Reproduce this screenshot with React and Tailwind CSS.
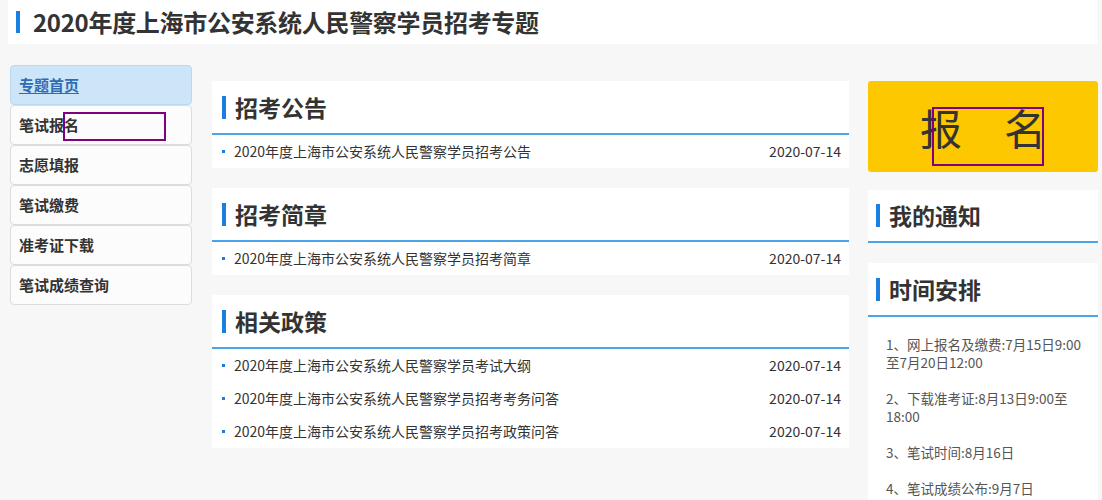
const font = { fontFamily: '"Microsoft YaHei", "Noto Sans CJK SC", sans-serif' };

const navItems = ['专题首页', '笔试报名', '志愿填报', '笔试缴费', '准考证下载', '笔试成绩查询'];

const sections = [
  {
    title: '招考公告',
    items: ['2020年度上海市公安系统人民警察学员招考公告'],
  },
  {
    title: '招考简章',
    items: ['2020年度上海市公安系统人民警察学员招考简章'],
  },
  {
    title: '相关政策',
    items: [
      '2020年度上海市公安系统人民警察学员考试大纲',
      '2020年度上海市公安系统人民警察学员招考考务问答',
      '2020年度上海市公安系统人民警察学员招考政策问答',
    ],
  },
];

const schedule = [
  '1、网上报名及缴费:7月15日9:00至7月20日12:00',
  '2、下载准考证:8月13日9:00至18:00',
  '3、笔试时间:8月16日',
  '4、笔试成绩公布:9月7日',
];

const PanelTitle = ({ children, pl = 'pl-[10px]', h = 'h-[54px]' }) => (
  <div className={`flex items-center ${h} ${pl} border-b-2 border-[#4ba3e8]`}>
    <span className="w-[4px] h-[23px] bg-[#1a7fe0] mr-[9px]"></span>
    <span className="text-[23px] font-bold text-[#333]">{children}</span>
  </div>
);

export default function App() {
  return (
    <div className="min-h-[500px] bg-[#f7f7f7] text-[#333]" style={font}>
      {/* Header */}
      <div className="ml-[8px] w-[1089px] h-[44px] bg-white flex items-center pl-[8px]">
        <span className="w-[4px] h-[22px] bg-[#1a7fe0] mr-[13px]"></span>
        <h1 className="text-[24px] font-bold text-[#333] tracking-[-0.3px]">2020年度上海市公安系统人民警察学员招考专题</h1>
      </div>

      <div className="flex pl-[10px]">
        {/* Left nav */}
        <div className="w-[182px] mt-[21px] flex flex-col">
          {navItems.map((item, i) => (
            <div
              key={item}
              className={`relative h-[40px] flex items-center pl-[8px] rounded-[4px] border text-[15px] font-bold ${
                i === 0
                  ? 'bg-[#cde5f8] border-[#bcd8ef] text-[#2e6db3] underline underline-offset-2'
                  : 'bg-[#fcfcfc] border-[#dcdcdc] text-[#333]'
              }`}
            >
              {item}
              {i === 1 && (
                <div className="absolute left-[52px] top-[6px] w-[103px] h-[29px] border-2 border-[#800080]"></div>
              )}
            </div>
          ))}
        </div>

        {/* Middle */}
        <div className="w-[637px] ml-[20px] mt-[37px] flex flex-col gap-[20px]">
          {sections.map((s) => (
            <div key={s.title} className="bg-white">
              <PanelTitle>{s.title}</PanelTitle>
              <ul>
                {s.items.map((it) => (
                  <li key={it} className="h-[33px] flex items-center pl-[10px] pr-[8px] text-[14px] text-[#333]">
                    <span className="w-[3px] h-[3px] bg-[#1a7fe0] mr-[9px]"></span>
                    <span className="flex-1">{it}</span>
                    <span>2020-07-14</span>
                  </li>
                ))}
              </ul>
            </div>
          ))}
        </div>

        {/* Right */}
        <div className="w-[230px] ml-[19px] mt-[37px] flex flex-col">
          <div className="relative h-[91px] bg-[#fdc800] rounded-[3px] flex items-center justify-center">
            <span className="text-[42px] text-[#333] leading-none">报　名</span>
            <div className="absolute left-[64px] top-[26px] w-[112px] h-[59px] border-2 border-[#800080]"></div>
          </div>
          <div className="bg-white mt-[18px]">
            <PanelTitle pl="pl-[8px]" h="h-[53px]">我的通知</PanelTitle>
          </div>
          <div className="bg-white mt-[20px] pb-[10px]">
            <PanelTitle pl="pl-[8px]" h="h-[54px]">时间安排</PanelTitle>
            <div className="pl-[18px] pr-[6px] pt-[18px] flex flex-col gap-[18px]">
              {schedule.map((t) => (
                <p key={t} className="text-[13.5px] leading-[18px] text-[#555]">{t}</p>
              ))}
            </div>
          </div>
        </div>
      </div>
    </div>
  );
}
